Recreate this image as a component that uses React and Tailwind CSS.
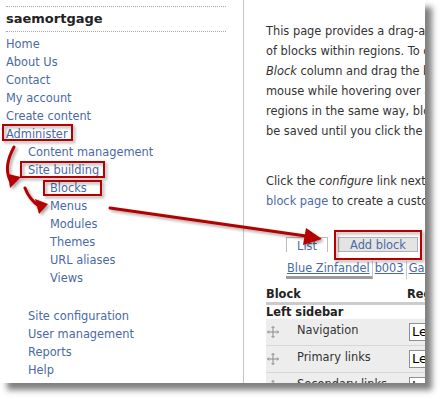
import React from 'react';

const font = { fontFamily: '"DejaVu Sans", Verdana, sans-serif' };

const navTop = ['Home', 'About Us', 'Contact', 'My account', 'Create content', 'Administer'];
const navSite = ['Blocks', 'Menus', 'Modules', 'Themes', 'URL aliases', 'Views'];
const navBottom = ['Site configuration', 'User management', 'Reports', 'Help'];

const DragHandle = () => (
  <svg width="12" height="12" viewBox="0 0 12 12" fill="none" stroke="#8a8a8a" strokeWidth="1">
    <path d="M6 0.5v11M0.5 6h11" />
    <path d="M4.5 2L6 0.5 7.5 2M4.5 10L6 11.5 7.5 10M2 4.5L0.5 6 2 7.5M10 4.5L11.5 6 10 7.5" />
  </svg>
);

const BlockRow = ({ name }) => (
  <div className="flex items-center h-[27px] bg-[#ededed] border-b border-[#d6d6d6]">
    <div className="w-[31px] shrink-0 pl-[1px] flex items-center">
      <DragHandle />
    </div>
    <div className="w-[112px] shrink-0 -mt-[2px]">{name}</div>
    <div className="h-[18px] w-[90px] shrink-0 border border-[#8f8f8f] bg-white text-[13px] leading-[16px] pl-[2px] text-black">
      Left sidebar
    </div>
  </div>
);

const Annotations = () => (
  <svg className="absolute inset-0 pointer-events-none" width="442" height="399" viewBox="0 0 442 399">
    <defs>
      <filter id="sh" x="-20%" y="-20%" width="140%" height="140%">
        <feDropShadow dx="2" dy="2" stdDeviation="1.5" floodColor="#000" floodOpacity="0.35" />
      </filter>
    </defs>
    <g filter="url(#sh)" fill="none" stroke="#b40000" strokeWidth="2">
      <rect x="3" y="125" width="69" height="15" />
      <rect x="21" y="162" width="83" height="15" />
      <rect x="44" y="181" width="57" height="14" />
      <rect x="335" y="231" width="86" height="28" />
    </g>
    <g filter="url(#sh)" stroke="#b40000" strokeWidth="3" fill="none" strokeLinecap="round">
      <path d="M14 147 C 8 158, 5 170, 10 180" />
      <path d="M25 188 C 28 196, 33 202, 39 206" />
      <path d="M110 208 L 306 236" />
    </g>
    <g filter="url(#sh)" fill="#b40000">
      <polygon points="21,177 8,174 10,188" />
      <polygon points="48,204 35,199 39,214" />
      <polygon points="322,239 306,228 303,245" />
    </g>
  </svg>
);

export default function App() {
  return (
    <div className="relative w-[442px] h-[399px] bg-white overflow-hidden" style={font}>
      <div className="w-[425px] h-[383px] flex overflow-hidden bg-white shadow-[7px_7px_6px_rgba(0,0,0,0.5)]">
        {/* sidebar */}
        <aside className="w-[244px] shrink-0 border-r border-[#c4c4c4] pt-[6px] pl-[6px]">
          <div className="w-[220px] h-[26px] border-y border-dotted border-[#a8a8a8] flex items-center font-bold text-[13px] text-[#222]">
            saemortgage
          </div>
          <ul className="mt-[3px] text-[11.4px] leading-[18px] text-[#4a6aa5]">
            {navTop.map((n) => (
              <li key={n}>{n}</li>
            ))}
            <li className="pl-[22px]">Content management</li>
            <li className="pl-[22px]">Site building</li>
            {navSite.map((n) => (
              <li key={n} className="pl-[44px]">{n}</li>
            ))}
            <li className="h-[20px]" />
            {navBottom.map((n) => (
              <li key={n} className="pl-[22px]">{n}</li>
            ))}
          </ul>
        </aside>

        {/* main content */}
        <main className="flex-1 min-w-0 overflow-hidden pl-[22px] pt-[21px] text-[11.4px] text-[#333] whitespace-nowrap">
          <div className="leading-[20px]">
            <p>This page provides a drag-and-drop interface for assigning a block to a region, and for controlling the order</p>
            <p>of blocks within regions. To change the region or order of a block, grab a drag-and-drop handle under the</p>
            <p><em>Block</em> column and drag the block to a new location in the list. (Grab a handle by clicking and holding the</p>
            <p>mouse while hovering over a handle icon.) Since not all themes implement the same regions, or display</p>
            <p>regions in the same way, blocks are positioned on a per-theme basis. Remember that your changes will not</p>
            <p>be saved until you click the <em>Save blocks</em> button at the bottom of the page.</p>
            <p className="mt-[30px]">Click the <em>configure</em> link next to each block to configure its specific title and visibility settings.</p>
            <p><span className="text-[#4a6aa5]">block page</span> to create a custom block.</p>
          </div>

          {/* tabs */}
          <div className="mt-[26px] pl-[20px] flex items-end gap-[10px] text-[#4a6aa5]">
            <div className="w-[42px] shrink-0 h-[15px] overflow-hidden border border-b-0 border-[#bdbdbd] bg-white text-center leading-[17px]">
              List
            </div>
            <div className="w-[80px] shrink-0 h-[15px] border border-[#b0b0b0] bg-[#e4e4e4] text-center leading-[14px]">
              Add block
            </div>
          </div>

          <div className="mt-[9px] pl-[20px] flex h-[18px] text-[#4a6aa5] leading-[15px]">
            <span className="shrink-0 pl-[1px] pr-[2px] underline border-b-[3px] border-[#9c9c9c] border-r border-r-[#c8c8c8]">Blue Zinfandel</span>
            <span className="shrink-0 px-[2px] underline border-r border-[#c8c8c8]">b003</span>
            <span className="shrink-0 px-[2px] underline">Garland</span>
          </div>

          {/* blocks table */}
          <div className="mt-[7px] flex font-bold leading-[16px] border-b-[3px] border-[#cbcbcb] text-[#222]">
            <div className="w-[141px] shrink-0">Block</div>
            <div className="shrink-0">Region</div>
          </div>
          <div className="font-bold leading-[14px] text-[#222]">Left sidebar</div>
          <BlockRow name="Navigation" />
          <BlockRow name="Primary links" />
          <BlockRow name="Secondary links" />
        </main>
      </div>
      <Annotations />
    </div>
  );
}
